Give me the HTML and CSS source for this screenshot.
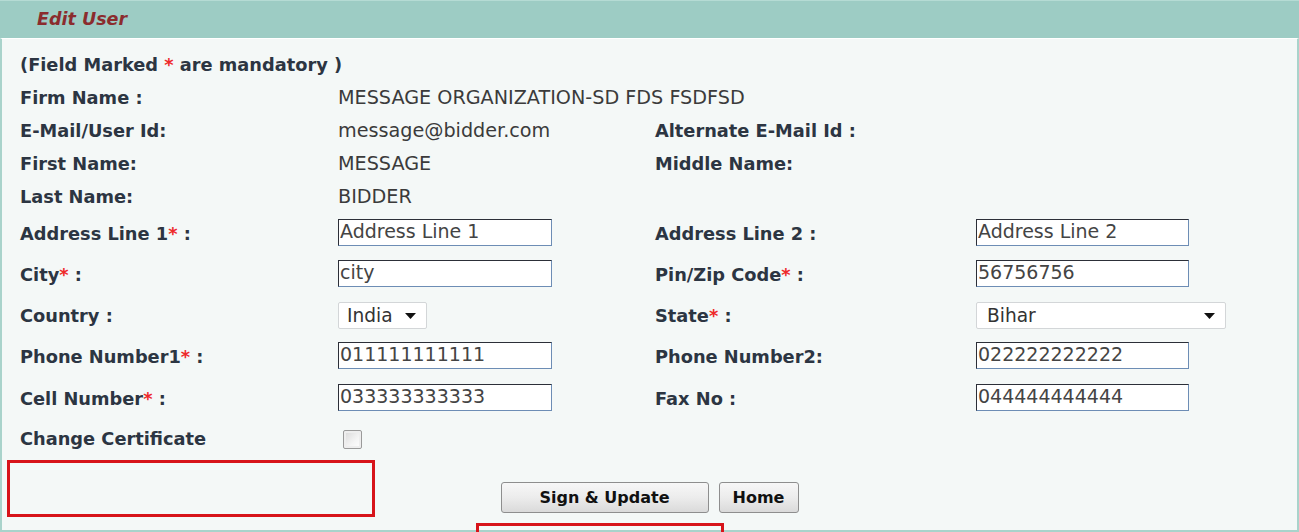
FILE: index.html
```html
<!DOCTYPE html>
<html>
<head>
<meta charset="utf-8">
<title>Edit User</title>
<link rel="stylesheet" href="styles.css">
</head>
<body>
<div class="panel">
  <div class="panel-head"><span class="title">Edit User</span></div>
  <div class="panel-body">
    <div class="form-grid">
      <div class="label full">(Field Marked <span class="req">*</span> are mandatory )</div>

      <div class="label">Firm Name :</div>
      <div class="value span3">MESSAGE ORGANIZATION-SD FDS FSDFSD</div>

      <div class="label">E-Mail/User Id:</div>
      <div class="value">message@bidder.com</div>
      <div class="label">Alternate E-Mail Id :</div>
      <div class="value"></div>

      <div class="label">First Name:</div>
      <div class="value">MESSAGE</div>
      <div class="label">Middle Name:</div>
      <div class="value"></div>

      <div class="label">Last Name:</div>
      <div class="value span3">BIDDER</div>

      <div class="label">Address Line 1<span class="req">*</span> :</div>
      <div class="value"><input class="txt" type="text" value="Address Line 1"></div>
      <div class="label">Address Line 2 :</div>
      <div class="value"><input class="txt txt2" type="text" value="Address Line 2"></div>

      <div class="label">City<span class="req">*</span> :</div>
      <div class="value"><input class="txt" type="text" value="city"></div>
      <div class="label">Pin/Zip Code<span class="req">*</span> :</div>
      <div class="value"><input class="txt txt2" type="text" value="56756756"></div>

      <div class="label">Country :</div>
      <div class="value">
        <span class="sel sel-country"><span class="sel-text">India</span><svg class="caret" width="11" height="6" viewBox="0 0 11 6"><path d="M0 0h11L5.5 6z" fill="#111"/></svg></span>
      </div>
      <div class="label">State<span class="req">*</span> :</div>
      <div class="value">
        <span class="sel sel-state"><span class="sel-text">Bihar</span><svg class="caret" width="11" height="6" viewBox="0 0 11 6"><path d="M0 0h11L5.5 6z" fill="#111"/></svg></span>
      </div>

      <div class="label">Phone Number1<span class="req">*</span> :</div>
      <div class="value"><input class="txt" type="text" value="011111111111"></div>
      <div class="label">Phone Number2:</div>
      <div class="value"><input class="txt txt2" type="text" value="022222222222"></div>

      <div class="label">Cell Number<span class="req">*</span> :</div>
      <div class="value"><input class="txt" type="text" value="033333333333"></div>
      <div class="label">Fax No :</div>
      <div class="value"><input class="txt txt2" type="text" value="044444444444"></div>

      <div class="label">Change Certificate</div>
      <div class="value span3"><input class="chk" type="checkbox"></div>
    </div>

    <div class="actions">
      <button class="btn btn-sign" type="button">Sign &amp; Update</button>
      <button class="btn btn-home" type="button">Home</button>
    </div>
  </div>
</div>
<div class="mark mark-left"></div>
<div class="mark mark-bottom"></div>
</body>
</html>
```
FILE: styles.css
```css
html, body {
  margin: 0;
  padding: 0;
  background: #f4f8f7;
  overflow: hidden;
}
body {
  width: 1299px;
  height: 532px;
  position: relative;
  font-family: "DejaVu Sans", Verdana, sans-serif;
}
.panel {
  width: 1299px;
  box-sizing: border-box;
}
.panel-head {
  height: 38px;
  box-sizing: border-box;
  background: #9dccc4;
  border-top: 1px solid #b5dbd4;
  display: flex;
  align-items: center;
  padding-left: 37px;
}
.title {
  color: #8b2c2e;
  font-weight: bold;
  font-style: italic;
  font-size: 17.5px;
  position: relative;
  top: -1px;
}
.panel-body {
  background: #f4f8f7;
  border: 2px solid #a9d3cb;
  border-top: 1px solid #ffffff;
  height: 494px;
  box-sizing: border-box;
  padding: 9px 0 0 18px;
}
.form-grid {
  display: grid;
  grid-template-columns: 318px 317px 321px 1fr;
  grid-template-rows: 33px 33px 33px 33px 33px 40px 42px 41px 41px 42px 39px;
  align-items: center;
}
.label {
  font-weight: bold;
  font-size: 17.8px;
  color: #2c3542;
  white-space: nowrap;
}
.full { grid-column: 1 / 5; }
.span3 { grid-column: 2 / 5; }
.req { color: #ee2a2a; }
.value {
  font-size: 19.2px;
  color: #3b3b3b;
  white-space: nowrap;
}
.txt {
  display: block;
  width: 214px;
  height: 27px;
  box-sizing: border-box;
  margin: 0;
  padding: 0 0 3px 1px;
  border: 1px solid;
  border-color: #2c2f38 #6d8db5 #6d8db5 #2c2f38;
  background: #fff;
  font-family: "DejaVu Sans", Verdana, sans-serif;
  font-size: 19px;
  color: #444;
  line-height: 22px;
  position: relative;
  top: -1px;
}
.txt2 { width: 213px; }
.sel {
  display: flex;
  align-items: center;
  justify-content: space-between;
  height: 27px;
  box-sizing: border-box;
  border: 1px solid #d3d6d8;
  border-radius: 2px;
  background: #fff;
  padding: 0 10px 0 8px;
  font-size: 18.6px;
  color: #333;
}
.sel-country { width: 89px; }
.sel-state { width: 250px; padding-left: 10px; }
.caret { display: block; }
.chk {
  appearance: none;
  -webkit-appearance: none;
  display: block;
  width: 19px;
  height: 19px;
  margin: 0 0 0 5px;
  box-sizing: border-box;
  border: 1px solid #9a9a9a;
  border-radius: 2px;
  background: linear-gradient(135deg, #d8d8d8 0%, #f4f4f4 60%, #ffffff 100%);
  box-shadow: inset 0 0 0 2px #eeeeee;
  position: relative;
  top: 1px;
}
.actions {
  display: flex;
  justify-content: center;
  gap: 10px;
  margin-top: 24px;
  padding-right: 18px;
}
.btn {
  height: 31px;
  box-sizing: border-box;
  border: 1px solid #8e8e8e;
  border-radius: 3px;
  background: linear-gradient(#f7f7f7 0%, #ececec 50%, #dadada 100%);
  font-family: "DejaVu Sans", Verdana, sans-serif;
  font-weight: bold;
  font-size: 16px;
  color: #111;
  padding: 0;
  margin: 0;
}
.btn-sign { width: 208px; }
.btn-home { width: 80px; }
.mark {
  position: absolute;
  border: 3px solid #d7141a;
  box-sizing: border-box;
}
.mark-left {
  left: 7px;
  top: 460px;
  width: 368px;
  height: 57px;
}
.mark-bottom {
  left: 476px;
  top: 523px;
  width: 248px;
  height: 30px;
}
```
